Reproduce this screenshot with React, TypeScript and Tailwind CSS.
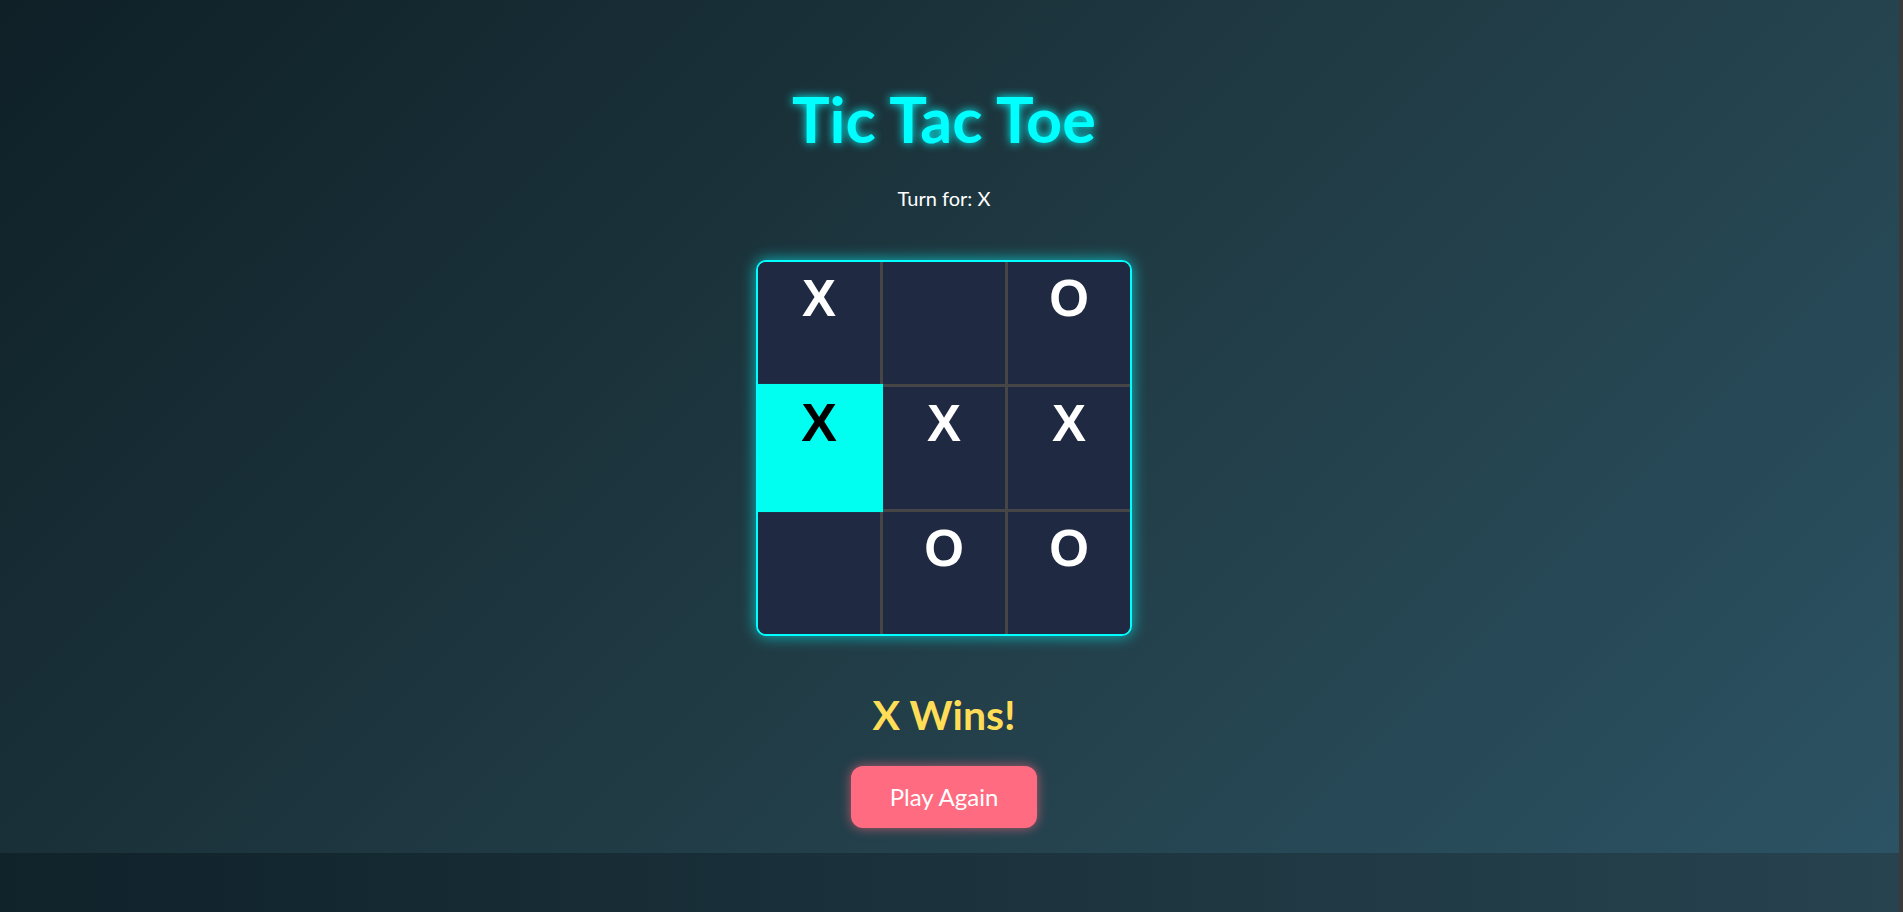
import React from 'react';

const cells = ['X', '', 'O', 'X', 'X', 'X', '', 'O', 'O'];
const winning = [3];

function Cell({ value, win }: { value: string; win: boolean }) {
  return (
    <div
      className={
        win
          ? 'relative z-10 h-[122px] w-[122px] scale-105 bg-[#00fff0] pt-[12px] text-center text-[51px] leading-[50px] font-bold text-black'
          : 'h-[122px] w-[122px] bg-[#1f2942] pt-[12px] text-center text-[51px] leading-[50px] font-bold text-white'
      }
      style={{ fontFamily: '"Liberation Sans", Arial, sans-serif' }}
    >
      {value}
    </div>
  );
}

export default function App() {
  return (
    <div className="flex min-h-screen" style={{ fontFamily: 'Lato, "Open Sans", sans-serif' }}>
      <div className="flex flex-1 flex-col">
        <div className="flex h-[853px] flex-col items-center bg-linear-135 from-[#0f2027] via-[#203a43] to-[#2c5364] pr-[11px] pt-[87px]">
          <h1 className="text-[63px] leading-[63px] font-bold text-[#00ffff] [text-shadow:0_0_10px_#00ffff]">
            Tic Tac Toe
          </h1>
          <p className="mt-[38px] text-[20px] leading-[20px] text-white">Turn for: X</p>

          <div className="mt-[52px] grid grid-cols-3 gap-[3px] overflow-hidden rounded-[10px] border-2 border-[#00ffff] bg-[#464646] shadow-[0_0_15px_#00ffffaa]">
            {cells.map((v, i) => (
              <Cell key={i} value={v} win={winning.includes(i)} />
            ))}
          </div>

          <h2 className="mt-[58px] text-[41px] leading-[41px] font-bold text-[#ffdd57]">X Wins!</h2>
          <button className="mt-[31px] h-[62px] w-[186px] rounded-[12px] bg-[#ff6b81] text-[24px] text-white shadow-[0_0_12px_#ff6b81aa]">
            Play Again
          </button>
        </div>
        <div className="flex-1 bg-linear-to-r from-[#10222a] to-[#27434f]" />
      </div>
      <div className="w-[4px] bg-[#3a3a3a]" />
    </div>
  );
}
